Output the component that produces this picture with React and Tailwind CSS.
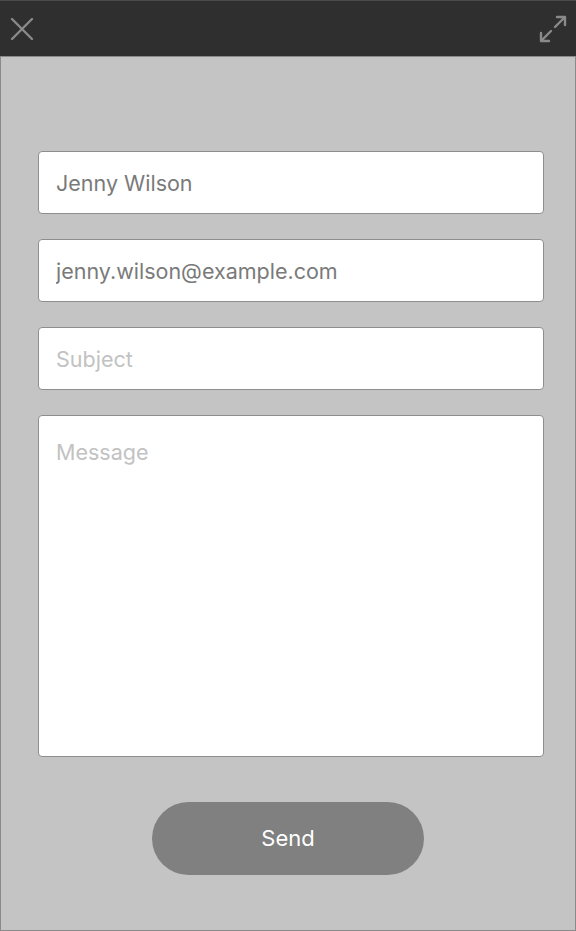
import { useState } from 'react';

const field =
  'w-full h-[63px] bg-white border border-[#8e8e8e] rounded-[4px] px-[17px] text-[21.5px] text-[#7a7a7a] placeholder-[#c2c2c2] outline-none';

export default function App() {
  const [form, setForm] = useState({
    name: 'Jenny Wilson',
    email: 'jenny.wilson@example.com',
    subject: '',
    message: '',
  });

  const set = (key) => (e) => setForm({ ...form, [key]: e.target.value });

  return (
    <div className="w-[576px] h-[931px] flex flex-col font-['Inter','Liberation_Sans',sans-serif]">
      {/* Top bar */}
      <div className="h-[57px] shrink-0 bg-[#2f2f2f] border-t border-[#4a4a4a] border-b border-b-[#8a8a8a] flex items-center justify-between px-[10px]">
        <button className="w-[24px] h-[24px] flex items-center justify-center">
          <svg width="24" height="24" viewBox="0 0 24 24" fill="none" stroke="#8a8a8a" strokeWidth="2.4" strokeLinecap="round">
            <path d="M2 2L22 22M22 2L2 22" />
          </svg>
        </button>
        <button className="w-[30px] h-[30px] flex items-center justify-center -mr-[2px]">
          <svg width="30" height="30" viewBox="0 0 30 30" fill="none" stroke="#8a8a8a" strokeWidth="2.4" strokeLinecap="round" strokeLinejoin="round">
            <path d="M17 13L27 3M19 3H27V11" />
            <path d="M13 17L3 27M3 19V27H11" />
          </svg>
        </button>
      </div>

      {/* Form body */}
      <form
        onSubmit={(e) => e.preventDefault()}
        className="flex-1 bg-[#c4c4c4] border-x border-b border-[#8a8a8a] pl-[37px] pr-[31px] pt-[94px] flex flex-col"
      >
        <div className="flex flex-col gap-[25px]">
          <input value={form.name} onChange={set('name')} className={field} />
          <input value={form.email} onChange={set('email')} className={field} />
          <input value={form.subject} onChange={set('subject')} placeholder="Subject" className={field} />
          <textarea
            value={form.message}
            onChange={set('message')}
            placeholder="Message"
            className="w-full h-[342px] bg-white border border-[#8e8e8e] rounded-[4px] px-[17px] pt-[20px] text-[21.5px] text-[#7a7a7a] placeholder-[#c2c2c2] outline-none resize-none"
          />
        </div>

        <div className="flex justify-center mt-[45px] pr-[6px]">
          <button
            type="submit"
            className="w-[272px] h-[73px] rounded-full bg-[#808080] text-white text-[22px]"
          >
            Send
          </button>
        </div>
      </form>
    </div>
  );
}
